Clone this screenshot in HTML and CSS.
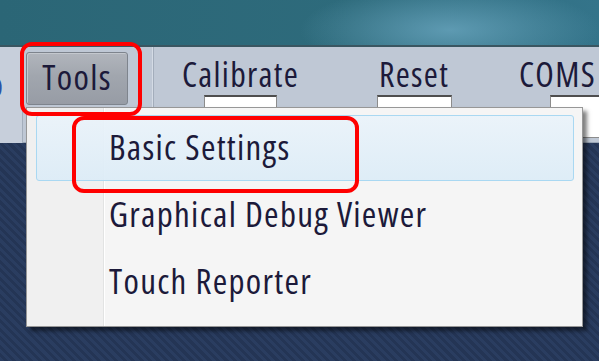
FILE: index.html
```html
<!DOCTYPE html>
<html>
<head>
<meta charset="utf-8">
<link rel="stylesheet" href="styles.css">
</head>
<body>
<div class="screen">
  <div class="titlebar"></div>
  <div class="toolbar">
    <div class="stub"><span class="stub-text">o</span></div>
    <div class="tools-group">
      <div class="tools-btn">Tools</div>
    </div>
    <div class="field field-calibrate">
      <div class="label">Calibrate</div>
      <div class="box box-calibrate"></div>
    </div>
    <div class="field field-reset">
      <div class="label">Reset</div>
      <div class="box box-reset"></div>
    </div>
    <div class="field field-coms">
      <div class="label">COMS</div>
      <div class="box box-coms"></div>
    </div>
  </div>
  <div class="desktop"></div>

  <div class="menu">
    <div class="item item-active">Basic Settings</div>
    <div class="item">Graphical Debug Viewer</div>
    <div class="item">Touch Reporter</div>
  </div>

  <div class="mark mark-tools"></div>
  <div class="mark mark-settings"></div>
</div>
</body>
</html>
```
FILE: styles.css
```css
html, body {
  margin: 0;
  padding: 0;
  background: #283a5c;
}

.screen {
  position: relative;
  width: 599px;
  height: 361px;
  overflow: hidden;
  display: flex;
  flex-direction: column;
  font-family: "Open Sans", sans-serif;
  font-stretch: 75%;
  font-weight: 400;
  letter-spacing: 1.3px;
  color: #1e1e2c;
}

.titlebar {
  height: 45px;
  flex: none;
  background:
    radial-gradient(ellipse 150px 45px at 450px 30px, rgba(105, 165, 190, 0.8), rgba(105, 165, 190, 0) 100%),
    linear-gradient(to right, #2b6676 0%, #2e6b7c 60%, #34748a 100%);
  border-bottom: 2px solid #3a5661;
}

.toolbar {
  height: 95px;
  flex: none;
  display: flex;
  background: #bfc8d5;
  border-bottom: 1px solid #9aa6b6;
}

.stub {
  width: 22px;
  flex: none;
  overflow: hidden;
  background: #c7cfdb;
  border-right: 1px solid #a3adbb;
  height: 101px;
}

.stub-text {
  display: block;
  margin: 20px 0 0 -12px;
  font-size: 34px;
  line-height: 34px;
  letter-spacing: 0;
  color: #2c52a6;
}

.tools-group {
  width: 127px;
  flex: none;
  padding-left: 3px;
  padding-top: 5px;
  border-right: 1px solid #a3adbb;
  box-shadow: inset -1px 0 0 #d4dbe5;
}

.tools-btn {
  width: 100px;
  height: 51px;
  border: 1px solid #7e848d;
  border-radius: 3px;
  background: linear-gradient(to bottom, #b1b5bc 0%, #a1a6ae 45%, #979ca5 100%);
  box-shadow: inset 1px 1px 0 #c4c8ce;
  text-align: center;
  font-size: 35px;
  line-height: 48px;
  color: #1c1a3a;
}

.field {
  flex: none;
  display: flex;
  flex-direction: column;
  align-items: center;
  padding-top: 10px;
}

.field-calibrate { width: 173px; }
.field-reset { width: 174px; }
.field-coms { width: 120px; align-items: flex-start; padding-left: 18px; }

.label {
  font-size: 34px;
  line-height: 34px;
  white-space: nowrap;
  color: #1c1a3a;
}

.box {
  margin-top: 4px;
  height: 40px;
  background: #fff;
  border: 1px solid #8c8c8c;
  border-top: 2px solid #4e4e4e;
}

.box-calibrate { width: 71px; }
.box-reset { width: 73px; }
.box-coms { width: 70px; margin-left: 31px; }

.desktop {
  flex: 1;
  background:
    repeating-linear-gradient(45deg, #2a3d60 0px, #2a3d60 3px, #243555 3px, #243555 6px);
}

.menu {
  position: absolute;
  left: 26px;
  top: 107px;
  height: 211px;
  width: 546px;
  border: 1px solid #979797;
  padding: 7px 0 0 9px;
  box-sizing: content-box;
  background: linear-gradient(to right, #f0f0f0 0, #f0f0f0 76px, #e2e3e3 76px, #e2e3e3 77px, #ffffff 77px, #ffffff 78px, #f5f5f5 78px);
  box-shadow: 4px 4px 4px rgba(0, 0, 0, 0.5);
  display: flex;
  flex-direction: column;
  gap: 1px;
}

.item {
  width: 464px;
  height: 64px;
  border: 1px solid transparent;
  border-radius: 3px;
  padding-left: 72px;
  box-sizing: content-box;
  font-size: 35px;
  line-height: 62px;
  white-space: nowrap;
  color: #1c1a3a;
}

.item-active {
  border-color: #a9d8f2;
  background: linear-gradient(to bottom, rgba(234, 243, 250, 0.92), rgba(220, 236, 247, 0.92));
}

.mark {
  position: absolute;
  border: 4px solid #ff0000;
  border-radius: 12px;
  box-sizing: border-box;
}

.mark-tools {
  left: 20px;
  top: 42px;
  width: 122px;
  height: 74px;
}

.mark-settings {
  left: 72px;
  top: 116px;
  width: 287px;
  height: 77px;
}
```
